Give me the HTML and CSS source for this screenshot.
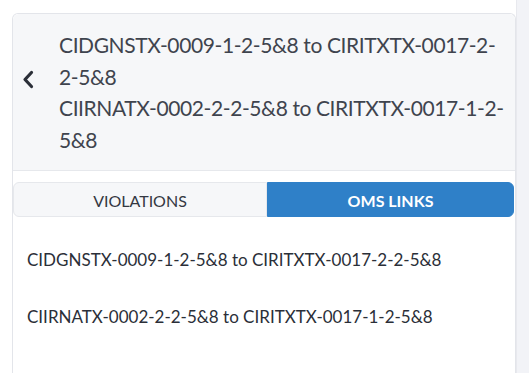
FILE: index.html
```html
<!DOCTYPE html>
<html lang="en">
<head>
    <meta charset="UTF-8">
    <meta name="viewport" content="width=device-width, initial-scale=1.0">
    <link rel="stylesheet" href="styles.css">
    <title>OMS Links</title>
</head>
<body>

<div class="layout">
    <div class="main">
        <div class="card">
            <div class="card-header">
                <button class="back" aria-label="Back">
                    <svg width="14" height="19" viewBox="0 0 14 19">
                        <path d="M10.5 2.5 L4 9.5 L10.5 16.5" fill="none" stroke="#2b2f38" stroke-width="3.2" stroke-linecap="round" stroke-linejoin="round"/>
                    </svg>
                </button>
                <div class="title">
                    <div>CIDGNSTX-0009-1-2-5&amp;8 to CIRITXTX-0017-2-2-5&amp;8</div>
                    <div>CIIRNATX-0002-2-2-5&amp;8 to CIRITXTX-0017-1-2-5&amp;8</div>
                </div>
            </div>

            <div class="tabs">
                <div class="tab">VIOLATIONS</div>
                <div class="tab active">OMS LINKS</div>
            </div>

            <ul class="links">
                <li>CIDGNSTX-0009-1-2-5&amp;8 to CIRITXTX-0017-2-2-5&amp;8</li>
                <li>CIIRNATX-0002-2-2-5&amp;8 to CIRITXTX-0017-1-2-5&amp;8</li>
            </ul>
        </div>
    </div>
    <div class="side"></div>
</div>

</body>
</html>
```

FILE: styles.css
```css
body {
    margin: 0;
    padding: 0;
    font-family: Lato, 'Noto Sans', sans-serif;
    background-color: #ffffff;
}

.layout {
    display: flex;
    height: 373px;
    overflow: hidden;
}

.main {
    width: 516px;
    padding: 13px 0 0 12px;
    box-sizing: border-box;
}

.side {
    flex: 1;
    background-color: #f2f3f7; /* grey strip on the right */
    border-left: 1px solid #e8e9ee;
}

.card {
    border: 1px solid #e3e5ea;
    border-bottom: none;
    border-radius: 6px 6px 0 0;
    height: 400px;
    background-color: #ffffff;
}

.card-header {
    display: flex;
    align-items: flex-start;
    background-color: #f6f7f9;
    border-bottom: 1px solid #e6e8ec;
    border-radius: 6px 6px 0 0;
    padding: 15px 10px 12px 8px;
    height: 157px;
    box-sizing: border-box;
}

.back {
    background: none;
    border: none;
    padding: 0;
    margin: 41px 24px 0 0;
    width: 14px;
    display: flex;
    cursor: pointer;
}

.title {
    color: #3f444e;
    font-size: 21px;
    letter-spacing: -0.4px;
    line-height: 31.7px;
}

.tabs {
    display: grid;
    grid-template-columns: 254px 1fr;
    margin: 11px 1px 0 0;
}

.tab {
    height: 35px;
    line-height: 35px;
    text-align: center;
    font-size: 16px;
    color: #343842;
    background-color: #f6f7f9;
    border: 1px solid #e6e8ec;
    border-radius: 6px 0 0 6px;
    box-sizing: border-box;
}

.tab.active {
    background-color: #2f80c8;
    border-color: #2f80c8;
    color: #ffffff;
    font-weight: bold;
    border-radius: 0 6px 6px 0;
}

.links {
    list-style: none;
    margin: 0;
    padding: 0 14px;
}

.links li {
    font-size: 17px;
    color: #2b2f38;
    padding-top: 29px;
    line-height: 28px;
}
```
